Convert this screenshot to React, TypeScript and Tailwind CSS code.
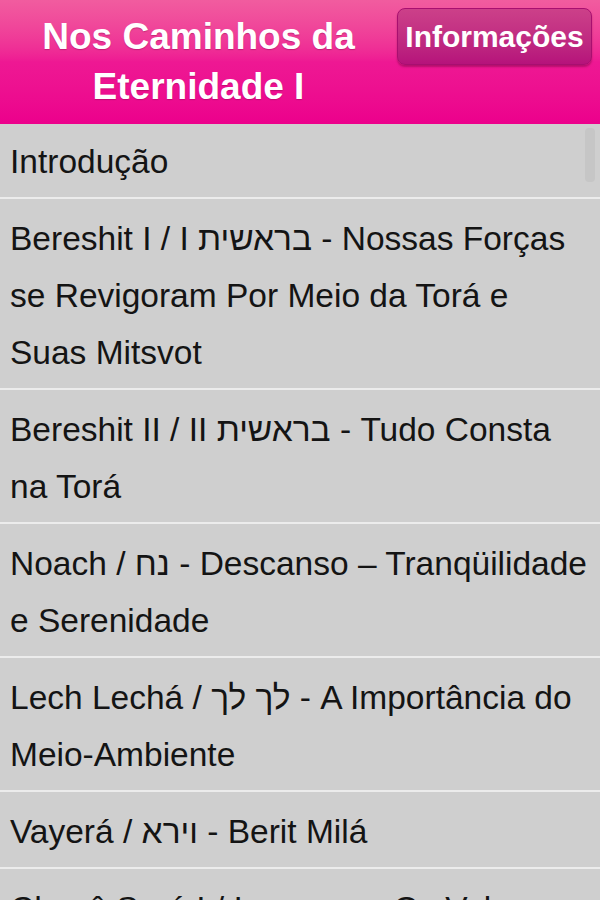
import React, { ReactElement } from "react";

// each chapter title is kept as its wrapped lines so the breaks match the app
const CHAPTERS: string[][] = [
  ["Introdução"],
  [
    "Bereshit I / I בראשית - Nossas Forças",
    "se Revigoram Por Meio da Torá e",
    "Suas Mitsvot",
  ],
  ["Bereshit II / II בראשית - Tudo Consta", "na Torá"],
  ["Noach / נח - Descanso – Tranqüilidade", "e Serenidade"],
  ["Lech Lechá / לך לך - A Importância do", "Meio-Ambiente"],
  ["Vayerá / וירא - Berit Milá"],
  ["Chayê Sará I / I חיי שרה - Os Valores", "Eternos"],
];

const App = (): ReactElement => {
  return (
    <div
      className="relative h-[900px] w-[600px] overflow-hidden bg-[#cfcfcf]"
      style={{ fontFamily: '"Liberation Sans", Arial, "DejaVu Sans", sans-serif' }}
    >
      <div className="flex h-[124px] bg-gradient-to-b from-[#f15c9f] via-[#ee1893] to-[#ec008c]">
        <div className="flex flex-1 items-center justify-center">
          <h1 className="text-center text-[37px] font-bold leading-[50px] text-white [text-shadow:0_1px_1px_rgba(120,0,60,0.35)]">
            Nos Caminhos da
            <br />
            Eternidade I
          </h1>
        </div>
        <button className="mr-[8px] mt-[8px] h-[57px] w-[195px] rounded-[8px] border border-[#a80f70] bg-gradient-to-b from-[#cc4089] to-[#b6127b] text-[30px] font-bold text-white shadow-[0_2px_2px_rgba(80,0,40,0.35)]">
          Informações
        </button>
      </div>

      <ul>
        {CHAPTERS.map((lines, i) => (
          <li
            key={lines[0]}
            className={`pb-[7px] pl-[10px] pr-[4px] ${
              i === 0 ? "pt-[9px]" : "border-t-2 border-[#ececec] pt-[11px]"
            }`}
          >
            {lines.map(line => (
              <span
                key={line}
                className="block whitespace-nowrap text-[33.5px] leading-[57px] text-[#141414]"
              >
                {line}
              </span>
            ))}
          </li>
        ))}
      </ul>

      {/* scroll indicator */}
      <div className="absolute right-[5px] top-[128px] h-[54px] w-[10px] rounded-[4px] bg-[#c6c6c6]" />
    </div>
  );
};

export default App;
